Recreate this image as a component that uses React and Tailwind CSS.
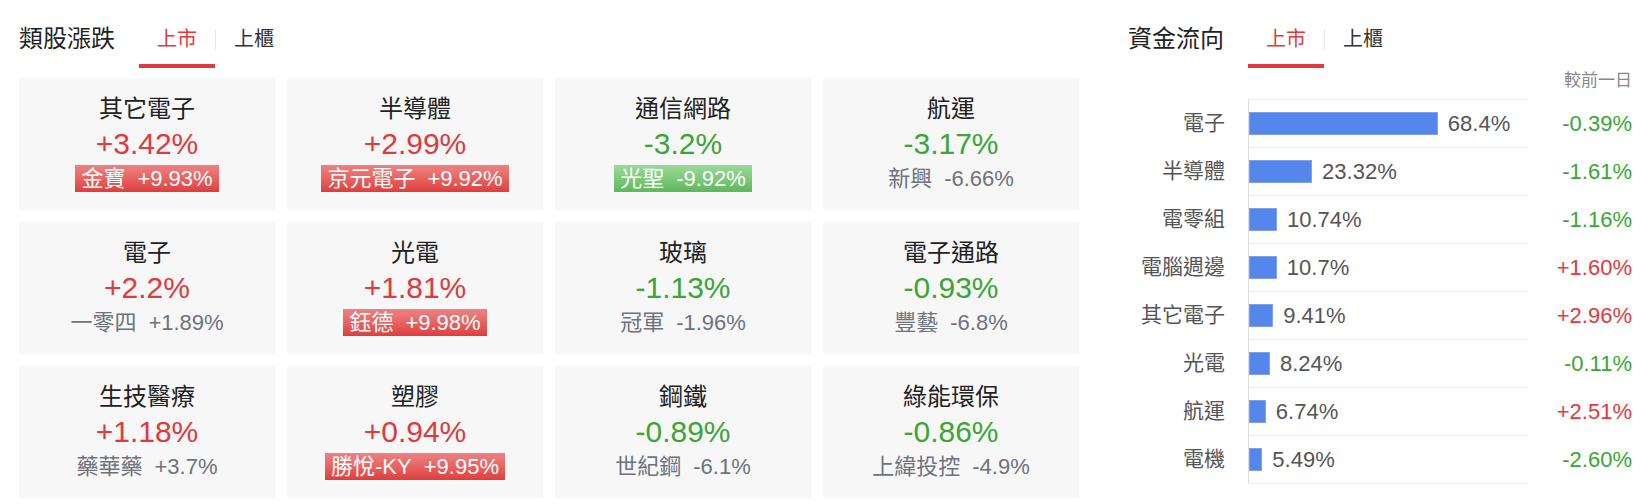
import React from "react";

const font = {
  fontFamily: '"Liberation Sans", "Noto Sans CJK TC", sans-serif',
};

const sectors = [
  { name: "其它電子", pct: "+3.42%", up: true, stock: "金寶", stockPct: "+9.93%", tag: "up" },
  { name: "半導體", pct: "+2.99%", up: true, stock: "京元電子", stockPct: "+9.92%", tag: "up" },
  { name: "通信網路", pct: "-3.2%", up: false, stock: "光聖", stockPct: "-9.92%", tag: "down" },
  { name: "航運", pct: "-3.17%", up: false, stock: "新興", stockPct: "-6.66%" },
  { name: "電子", pct: "+2.2%", up: true, stock: "一零四", stockPct: "+1.89%" },
  { name: "光電", pct: "+1.81%", up: true, stock: "鈺德", stockPct: "+9.98%", tag: "up" },
  { name: "玻璃", pct: "-1.13%", up: false, stock: "冠軍", stockPct: "-1.96%" },
  { name: "電子通路", pct: "-0.93%", up: false, stock: "豐藝", stockPct: "-6.8%" },
  { name: "生技醫療", pct: "+1.18%", up: true, stock: "藥華藥", stockPct: "+3.7%" },
  { name: "塑膠", pct: "+0.94%", up: true, stock: "勝悅-KY", stockPct: "+9.95%", tag: "up" },
  { name: "鋼鐵", pct: "-0.89%", up: false, stock: "世紀鋼", stockPct: "-6.1%" },
  { name: "綠能環保", pct: "-0.86%", up: false, stock: "上緯投控", stockPct: "-4.9%" },
];

const flows = [
  { name: "電子", share: 68.4, change: "-0.39%", up: false },
  { name: "半導體", share: 23.32, change: "-1.61%", up: false },
  { name: "電零組", share: 10.74, change: "-1.16%", up: false },
  { name: "電腦週邊", share: 10.7, change: "+1.60%", up: true },
  { name: "其它電子", share: 9.41, change: "+2.96%", up: true },
  { name: "光電", share: 8.24, change: "-0.11%", up: false },
  { name: "航運", share: 6.74, change: "+2.51%", up: true },
  { name: "電機", share: 5.49, change: "-2.60%", up: false },
];

const Header = ({ title }) => (
  <div className="flex h-[68px] items-stretch">
    <div className="flex items-center pt-[13px] pb-[4px] mr-[24px] text-[24px] text-[#222]">
      {title}
    </div>
    <button className="flex items-center px-[18px] pt-[13px] border-b-4 border-[#e0393e] text-[20px] text-[#e0393e]">
      上市
    </button>
    <div className="mt-[29px] h-[21px] w-px bg-[#e6e6e6]" />
    <button className="flex items-center px-[18px] pt-[13px] border-b-4 border-transparent text-[20px] text-[#333]">
      上櫃
    </button>
  </div>
);

const SectorCard = ({ s }) => {
  const sub = (
    <>
      <span>{s.stock}</span>
      <span>{s.stockPct}</span>
    </>
  );
  return (
    <div className="flex h-[132px] flex-col items-center bg-[#f7f7f7] pt-[16px]">
      <div className="text-[24px] leading-[30px] text-[#222]">{s.name}</div>
      <div
        className={
          "mt-[2px] text-[30px] leading-[36px] " +
          (s.up ? "text-[#e0393e]" : "text-[#3ba535]")
        }
      >
        {s.pct}
      </div>
      {s.tag === "up" && (
        <div className="mt-[3px] flex h-[27px] gap-3 bg-linear-to-b from-[#ec8383] to-[#e03c3c] px-[6px] text-[22px] leading-[27px] text-white">
          {sub}
        </div>
      )}
      {s.tag === "down" && (
        <div className="mt-[3px] flex h-[27px] gap-3 bg-linear-to-b from-[#9ad99a] to-[#5db95a] px-[6px] text-[22px] leading-[27px] text-white">
          {sub}
        </div>
      )}
      {!s.tag && (
        <div className="mt-[3px] flex h-[27px] gap-3 text-[22px] leading-[27px] text-[#6e737b]">
          {sub}
        </div>
      )}
    </div>
  );
};

// bar length follows the share of turnover
const barWidth = (share) => Math.max(share * 2.79 - 2, 4);

const FlowRow = ({ f }) => (
  <div className="flex h-[48px] items-stretch">
    <div className="flex w-[97px] items-center justify-end text-[21px] text-[#555]">
      {f.name}
    </div>
    <div className="ml-[23px] flex w-[280px] items-center border-l border-t border-l-[#dcdcdc] border-t-[#eeeeee]">
      <div
        className="h-[23px] border border-[#7ea3ee] bg-[#5586eb]"
        style={{ width: barWidth(f.share) }}
      />
      <span className="ml-[10px] text-[22px] text-[#555]">{f.share}%</span>
    </div>
    <div
      className={
        "flex flex-1 items-center justify-end text-[22px] " +
        (f.up ? "text-[#e0393e]" : "text-[#3ba535]")
      }
    >
      {f.change}
    </div>
  </div>
);

export default function App() {
  return (
    <div className="flex h-[504px] w-[1648px] bg-white pl-[19px]" style={font}>
      <section className="w-[1060px]">
        <Header title="類股漲跌" />
        <div className="mt-[10px] grid grid-cols-4 gap-3">
          {sectors.map((s) => (
            <SectorCard key={s.name} s={s} />
          ))}
        </div>
      </section>

      <section className="ml-[49px] w-[504px]">
        <Header title="資金流向" />
        <div className="flex h-[31px] justify-end pt-[3px] text-[17px] leading-[20px] text-[#888]">
          較前一日
        </div>
        <div className="flex flex-col">
          {flows.map((f) => (
            <FlowRow key={f.name} f={f} />
          ))}
          <div className="flex">
            <div className="ml-[120px] h-[1px] w-[280px] bg-[#eeeeee]" />
          </div>
        </div>
      </section>
    </div>
  );
}
